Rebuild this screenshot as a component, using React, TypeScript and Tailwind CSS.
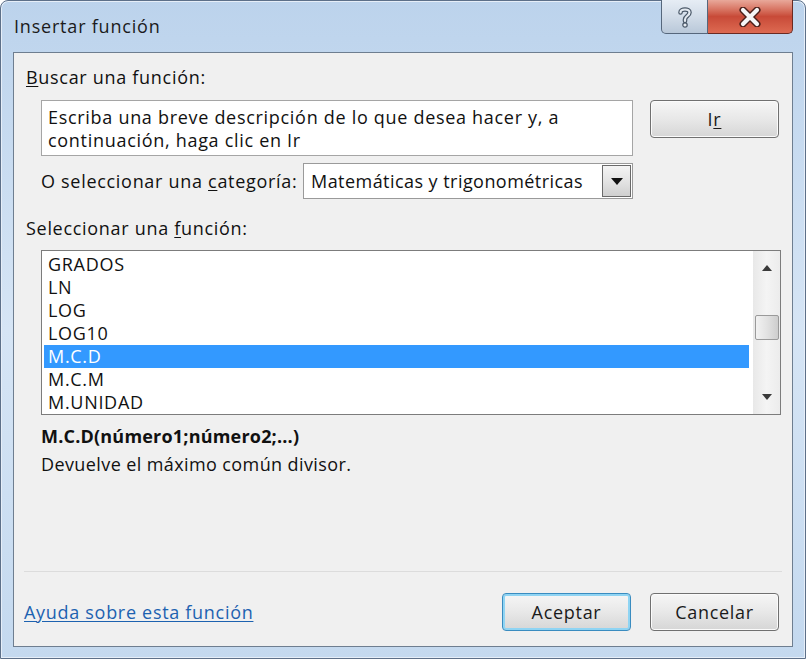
import React from "react";

const items = ["GRADOS", "LN", "LOG", "LOG10", "M.C.D", "M.C.M", "M.UNIDAD"];

function WinButton({ children, primary = false }: { children: React.ReactNode; primary?: boolean }) {
  return (
    <div
      className={
        "w-[129px] h-[38px] rounded-[4px] border flex items-center justify-center text-[#1a1a1a] bg-gradient-to-b from-[#f6f6f6] via-[#e8e8e8] to-[#d6d6d6] " +
        (primary
          ? "border-[#3a8cc0] shadow-[inset_0_0_0_2px_#8fd4f3]"
          : "border-[#707070] shadow-[inset_0_0_0_1px_#fbfbfb]")
      }
    >
      {children}
    </div>
  );
}

export default function App() {
  return (
    <div className="w-[806px] h-[659px] bg-white font-['Open_Sans',sans-serif] text-[18px] tracking-[0.7px]">
      <div className="w-[806px] h-[659px] rounded-t-[8px] border border-[#5d7089] bg-gradient-to-b from-[#bcd3ec] via-[#d6e5f5] to-[#c4d9ef] flex flex-col px-[12px] pb-[11px] shadow-[inset_0_0_0_1px_#e6eef8]">
        {/* title bar */}
        <div className="h-[51px] flex items-start">
          <div className="h-[51px] flex items-center pl-[1px] text-[#1b1b1b] tracking-[0.8px]">Insertar función</div>
          <div className="ml-auto flex mt-[-1px]">
            <div className="w-[47px] h-[34px] rounded-bl-[5px] border border-t-0 border-[#56677c] bg-gradient-to-b from-[#e6edf5] via-[#d2dce8] to-[#b9c8d9] flex items-center justify-center">
              <svg width="16" height="22" viewBox="0 0 16 22">
                <path d="M3.5 6.5 C3.5 2.5 12.5 2.5 12.5 6.5 C12.5 10 8 10 8 13.5 V15" fill="none" stroke="#4a5868" strokeWidth="4.6" strokeLinecap="round" />
                <path d="M3.5 6.5 C3.5 2.5 12.5 2.5 12.5 6.5 C12.5 10 8 10 8 13.5 V15" fill="none" stroke="#e4eaf1" strokeWidth="2.2" strokeLinecap="round" />
                <circle cx="8" cy="19" r="2.2" fill="#e4eaf1" stroke="#4a5868" strokeWidth="1.2" />
              </svg>
            </div>
            <div className="w-[85px] h-[34px] rounded-br-[5px] border border-t-0 border-l-0 border-[#6a2a22] bg-gradient-to-b from-[#e8a89a] via-[#c84a38] to-[#dd6a52] flex items-center justify-center">
              <svg width="22" height="20" viewBox="0 0 22 20">
                <path d="M4 3 L18 17 M18 3 L4 17" stroke="#4a1e18" strokeWidth="7" strokeLinecap="round" />
                <path d="M4 3 L18 17 M18 3 L4 17" stroke="#f6f6f6" strokeWidth="4.2" strokeLinecap="round" />
              </svg>
            </div>
          </div>
        </div>

        {/* client */}
        <div className="flex-1 border border-[#6e7e90] bg-[#f0f0f0] flex flex-col text-[#111]">
          <div className="ml-[12px] mt-[13px] h-[23px] leading-[23px]">
            <span className="underline underline-offset-2">B</span>uscar una función:
          </div>

          <div className="ml-[27px] mt-[11px] flex items-start">
            <div className="w-[592px] h-[56px] bg-white border border-[#a5a5a5] px-[6px] pt-[5px] leading-[23px] whitespace-nowrap">
              Escriba una breve descripción de lo que desea hacer y, a
              <br />
              continuación, haga clic en Ir
            </div>
            <div className="ml-[17px]">
              <WinButton>
                I<span className="underline underline-offset-2">r</span>
              </WinButton>
            </div>
          </div>

          <div className="ml-[27px] mt-[7px] flex items-center h-[36px]">
            <div className="w-[262px]">
              O seleccionar una <span className="underline underline-offset-2">c</span>ategoría:
            </div>
            <div className="w-[330px] h-[36px] bg-white border border-[#9a9a9a] flex items-center">
              <div className="flex-1 pl-[7px] tracking-[0.45px]">Matemáticas y trigonométricas</div>
              <div className="w-[29px] h-[32px] mr-[1px] border border-[#6a6a6a] bg-gradient-to-b from-[#f4f4f4] via-[#e4e4e4] to-[#cfcfcf] flex items-center justify-center">
                <svg width="12" height="7" viewBox="0 0 12 7">
                  <path d="M0 0 H12 L6 7 Z" fill="#111" />
                </svg>
              </div>
            </div>
          </div>

          <div className="ml-[12px] mt-[18px] h-[23px] leading-[23px]">
            Seleccionar una <span className="underline underline-offset-2">f</span>unción:
          </div>

          <div className="ml-[27px] mt-[10px] w-[740px] h-[165px] bg-white border border-[#7c7c7c] flex">
            <div className="flex-1 pt-[2px] pl-[2px] pr-[4px] overflow-hidden">
              {items.map((it) => (
                <div
                  key={it}
                  className={
                    "h-[23px] leading-[23px] pl-[4px] " +
                    (it === "M.C.D" ? "bg-[#3399ff] text-white" : "")
                  }
                >
                  {it}
                </div>
              ))}
            </div>
            <div className="w-[27px] bg-gradient-to-r from-[#e8e8e8] via-[#f4f4f4] to-[#ececec] flex flex-col">
              <div className="h-[34px] flex items-center justify-center">
                <svg width="10" height="6" viewBox="0 0 10 6">
                  <path d="M0 6 L5 0 L10 6 Z" fill="#3a3a3a" />
                </svg>
              </div>
              <div className="h-[30px]" />
              <div className="mx-auto w-[24px] h-[25px] rounded-[2px] border border-[#9a9a9a] bg-gradient-to-r from-[#f2f2f2] via-[#e2e2e2] to-[#cdcdcd]" />
              <div className="flex-1" />
              <div className="h-[34px] flex items-center justify-center">
                <svg width="10" height="6" viewBox="0 0 10 6">
                  <path d="M0 0 L10 0 L5 6 Z" fill="#3a3a3a" />
                </svg>
              </div>
            </div>
          </div>

          <div className="ml-[27px] mt-[10px] h-[23px] leading-[23px] font-bold tracking-[0.2px]">M.C.D(número1;número2;...)</div>
          <div className="ml-[27px] mt-[5px] h-[23px] leading-[23px] tracking-[0.4px]">Devuelve el máximo común divisor.</div>

          <div className="ml-[10px] mt-[95px] w-[758px] h-px bg-[#dcdcdc]" />

          <div className="mt-[21px] h-[38px] flex items-center">
            <div className="ml-[10px] text-[#1d62b0] underline underline-offset-2">Ayuda sobre esta función</div>
            <div className="ml-auto mr-[13px] flex gap-[19px]">
              <WinButton primary>Aceptar</WinButton>
              <WinButton>Cancelar</WinButton>
            </div>
          </div>
        </div>
      </div>
    </div>
  );
}
